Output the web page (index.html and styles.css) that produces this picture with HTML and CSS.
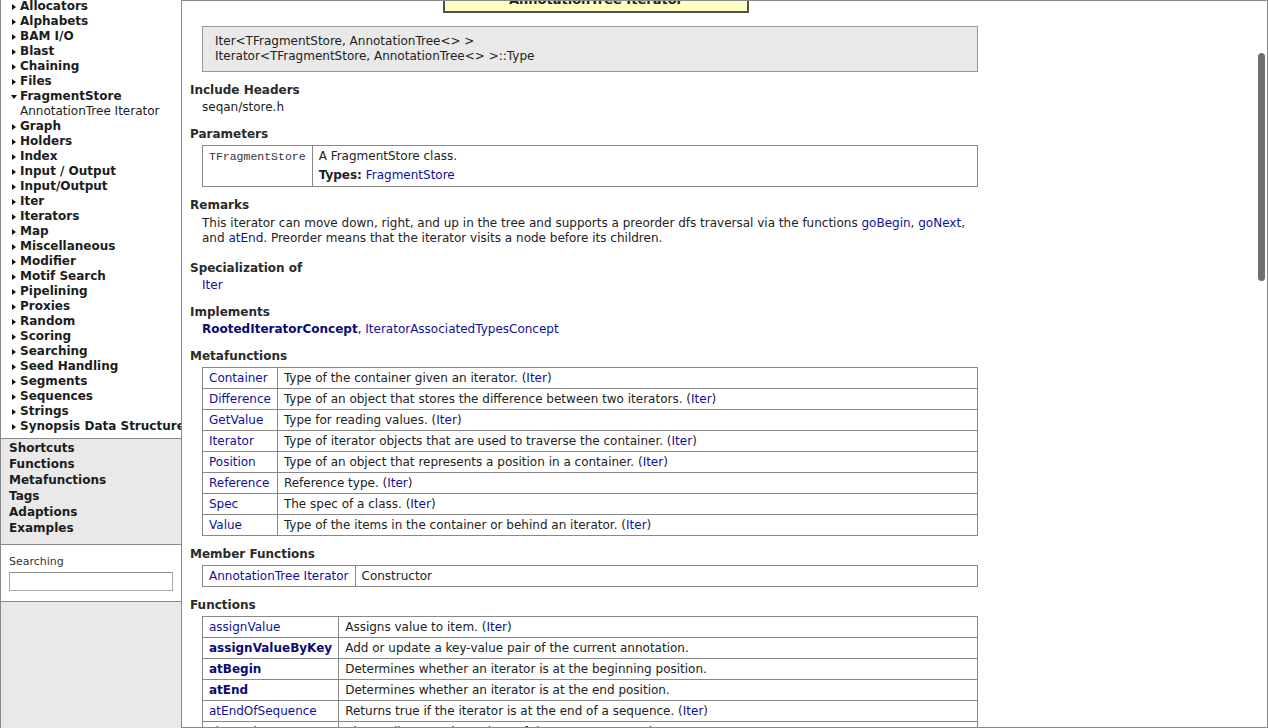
FILE: index.html
```html
<!DOCTYPE html>
<html>
<head>
<meta charset="utf-8">
<title>AnnotationTree Iterator</title>
<link rel="stylesheet" href="styles.css">
</head>
<body>
<nav class="sidebar">
  <ul class="tree">
    <li class="closed">Allocators</li>
    <li class="closed">Alphabets</li>
    <li class="closed">BAM I/O</li>
    <li class="closed">Blast</li>
    <li class="closed">Chaining</li>
    <li class="closed">Files</li>
    <li class="open">FragmentStore</li>
    <li class="child">AnnotationTree Iterator</li>
    <li class="closed">Graph</li>
    <li class="closed">Holders</li>
    <li class="closed">Index</li>
    <li class="closed">Input / Output</li>
    <li class="closed">Input/Output</li>
    <li class="closed">Iter</li>
    <li class="closed">Iterators</li>
    <li class="closed">Map</li>
    <li class="closed">Miscellaneous</li>
    <li class="closed">Modifier</li>
    <li class="closed">Motif Search</li>
    <li class="closed">Pipelining</li>
    <li class="closed">Proxies</li>
    <li class="closed">Random</li>
    <li class="closed">Scoring</li>
    <li class="closed">Searching</li>
    <li class="closed">Seed Handling</li>
    <li class="closed">Segments</li>
    <li class="closed">Sequences</li>
    <li class="closed">Strings</li>
    <li class="closed">Synopsis Data Structure</li>
  </ul>
  <ul class="shortcuts">
    <li>Shortcuts</li>
    <li>Functions</li>
    <li>Metafunctions</li>
    <li>Tags</li>
    <li>Adaptions</li>
    <li>Examples</li>
  </ul>
  <div class="search">
    <div class="search-label">Searching</div>
    <input class="search-input" type="text">
  </div>
  <div class="filler"></div>
</nav>
<main class="main">
  <div class="title-box">AnnotationTree Iterator</div>
  <div class="scroll-thumb"></div>
  <div class="content">
    <div class="signature">
      <div>Iter&lt;TFragmentStore, AnnotationTree&lt;&gt; &gt;</div>
      <div>Iterator&lt;TFragmentStore, AnnotationTree&lt;&gt; &gt;::Type</div>
    </div>

    <section class="sec text-sec">
      <h3>Include Headers</h3>
      <div class="txt">seqan/store.h</div>
    </section>

    <section class="sec">
      <h3>Parameters</h3>
      <table class="tbl params">
        <tr>
          <td class="c1"><code>TFragmentStore</code></td>
          <td><div>A FragmentStore class.</div><div class="types"><b>Types:</b> <a href="#">FragmentStore</a></div></td>
        </tr>
      </table>
    </section>

    <section class="sec text-sec remarks">
      <h3>Remarks</h3>
      <div class="txt">This iterator can move down, right, and up in the tree and supports a preorder dfs traversal via the functions <a href="#">goBegin</a>, <a href="#">goNext</a>, and <a href="#">atEnd</a>. Preorder means that the iterator visits a node before its children.</div>
    </section>

    <section class="sec text-sec">
      <h3>Specialization of</h3>
      <div class="txt"><a href="#">Iter</a></div>
    </section>

    <section class="sec text-sec">
      <h3>Implements</h3>
      <div class="txt"><a href="#" class="strong">RootedIteratorConcept</a>, <a href="#">IteratorAssociatedTypesConcept</a></div>
    </section>

    <section class="sec">
      <h3>Metafunctions</h3>
      <table class="tbl meta">
        <tr><td class="c1"><a href="#">Container</a></td><td>Type of the container given an iterator. (<a href="#">Iter</a>)</td></tr>
        <tr><td class="c1"><a href="#">Difference</a></td><td>Type of an object that stores the difference between two iterators. (<a href="#">Iter</a>)</td></tr>
        <tr><td class="c1"><a href="#">GetValue</a></td><td>Type for reading values. (<a href="#">Iter</a>)</td></tr>
        <tr><td class="c1"><a href="#">Iterator</a></td><td>Type of iterator objects that are used to traverse the container. (<a href="#">Iter</a>)</td></tr>
        <tr><td class="c1"><a href="#">Position</a></td><td>Type of an object that represents a position in a container. (<a href="#">Iter</a>)</td></tr>
        <tr><td class="c1"><a href="#">Reference</a></td><td>Reference type. (<a href="#">Iter</a>)</td></tr>
        <tr><td class="c1"><a href="#">Spec</a></td><td>The spec of a class. (<a href="#">Iter</a>)</td></tr>
        <tr><td class="c1"><a href="#">Value</a></td><td>Type of the items in the container or behind an iterator. (<a href="#">Iter</a>)</td></tr>
      </table>
    </section>

    <section class="sec">
      <h3>Member Functions</h3>
      <table class="tbl member">
        <tr><td class="c1"><a href="#">AnnotationTree Iterator</a></td><td>Constructor</td></tr>
      </table>
    </section>

    <section class="sec">
      <h3>Functions</h3>
      <table class="tbl funcs">
        <tr><td class="c1"><a href="#">assignValue</a></td><td>Assigns value to item. (<a href="#">Iter</a>)</td></tr>
        <tr><td class="c1"><a href="#" class="strong">assignValueByKey</a></td><td>Add or update a key-value pair of the current annotation.</td></tr>
        <tr><td class="c1"><a href="#" class="strong">atBegin</a></td><td>Determines whether an iterator is at the beginning position.</td></tr>
        <tr><td class="c1"><a href="#" class="strong">atEnd</a></td><td>Determines whether an iterator is at the end position.</td></tr>
        <tr><td class="c1"><a href="#">atEndOfSequence</a></td><td>Returns true if the iterator is at the end of a sequence. (<a href="#">Iter</a>)</td></tr>
        <tr><td class="c1"><a href="#">clearValues</a></td><td>Clears all annotation values of the current annotation.</td></tr>
        <tr><td class="c1"><a href="#">container</a></td><td>Container of an iterator. (<a href="#">Iter</a>)</td></tr>
      </table>
    </section>
  </div>
</main>
</body>
</html>
```

FILE: styles.css
```css
* { box-sizing: border-box; }

html, body {
  margin: 0;
  padding: 0;
  height: 728px;
  overflow: hidden;
}

body {
  display: flex;
  font-family: "DejaVu Sans", Verdana, sans-serif;
  font-size: 12px;
  color: #222;
  background: #fff;
}

a {
  color: #10109a;
  text-decoration: none;
}

a.strong {
  color: #0a0a70;
  font-weight: bold;
}

/* ---------- sidebar ---------- */
.sidebar {
  width: 182px;
  flex: none;
  display: flex;
  flex-direction: column;
  border-left: 1px solid #8a8a8a;
  border-right: 1px solid #8a8a8a;
  background: #fff;
}

.tree {
  list-style: none;
  margin: -1px 0 0 0;
  padding: 0 0 4px 0;
  border-bottom: 1px solid #8a8a8a;
  white-space: nowrap;
  overflow: hidden;
}

.tree li {
  line-height: 15px;
  height: 15px;
  padding-left: 19px;
  font-weight: bold;
  color: #1c1c1c;
  display: flex;
  align-items: center;
}

.tree li.closed::before,
.tree li.open::before {
  content: "";
  display: block;
  width: 0;
  height: 0;
  margin-left: -8px;
  margin-right: 4px;
}

.tree li.closed::before {
  border-top: 3.5px solid transparent;
  border-bottom: 3.5px solid transparent;
  border-left: 4px solid #111;
}

.tree li.open::before {
  margin-left: -9px;
  margin-right: 3px;
  border-left: 3.5px solid transparent;
  border-right: 3.5px solid transparent;
  border-top: 4px solid #111;
}

.tree li.child {
  font-weight: normal;
  color: #222;
}

.shortcuts {
  list-style: none;
  margin: 0;
  padding: 1px 0 8px 8px;
  background: #e9e9e9;
  border-bottom: 1px solid #8a8a8a;
}

.shortcuts li {
  line-height: 16px;
  font-weight: bold;
  color: #1c1c1c;
}

.search {
  padding: 10px 8px 10px 8px;
  border-bottom: 1px solid #8a8a8a;
}

.search-label {
  font-size: 11px;
  line-height: 13px;
  color: #333;
  margin-bottom: 4px;
}

.search-input {
  display: block;
  width: 164px;
  height: 19px;
  margin: 0;
  border: 1px solid #a8a8a8;
  border-top-color: #8c8c8c;
  background: #fff;
  padding: 0 3px;
}

.filler {
  flex: 1;
  background: #e9e9e9;
}

/* ---------- main ---------- */
.main {
  flex: 1;
  position: relative;
  border-top: 1px solid #8a8a8a;
  border-right: 1px solid #8a8a8a;
  border-bottom: 1px solid #8a8a8a;
  overflow: hidden;
}

.title-box {
  position: absolute;
  left: 261px;
  top: -12px;
  width: 306px;
  height: 24px;
  line-height: 22px;
  background: #ffffc2;
  border: 2px solid #505050;
  border-top: none;
  text-align: center;
  font-weight: bold;
  font-size: 13px;
  color: #222;
  z-index: 2;
}

.scroll-thumb {
  position: absolute;
  right: 2px;
  top: 52px;
  width: 7px;
  height: 228px;
  border-radius: 4px;
  background: #6f6f6f;
}

.content {
  padding: 25px 0 0 8px;
  width: 796px;
}

.signature {
  margin-left: 12px;
  width: 776px;
  background: #e9e9e9;
  border: 1px solid #999;
  padding: 7px 12px 7px 12px;
  line-height: 15px;
}

.sec {
  margin-top: 10px;
}

.sec h3 {
  margin: 0;
  font-size: 12px;
  line-height: 17px;
  font-weight: bold;
  color: #2a2a2a;
}

.txt {
  margin-left: 12px;
  line-height: 15px;
  padding-top: 1px;
  padding-bottom: 1px;
}

.remarks .txt {
  padding-top: 2px;
  padding-bottom: 4px;
}

.tbl {
  margin: 2px 0 0 12px;
  width: 776px;
  border-collapse: collapse;
}

.tbl td {
  border: 1px solid #888;
  padding: 3px 6px 2px 6px;
  line-height: 15px;
  vertical-align: top;
  white-space: nowrap;
}

.tbl td:last-child {
  width: 100%;
}

.params td {
  padding: 3px 6px 3px 6px;
}

.params .c1 {
  width: 111px;
}

.params code {
  font-family: "Liberation Mono", "Courier New", monospace;
  font-size: 11.5px;
  color: #333;
}

.params .types {
  margin-top: 4px;
}

.meta .c1 { width: 73px; }
.member .c1 { width: 155px; }
.funcs .c1 { width: 136px; }
```
